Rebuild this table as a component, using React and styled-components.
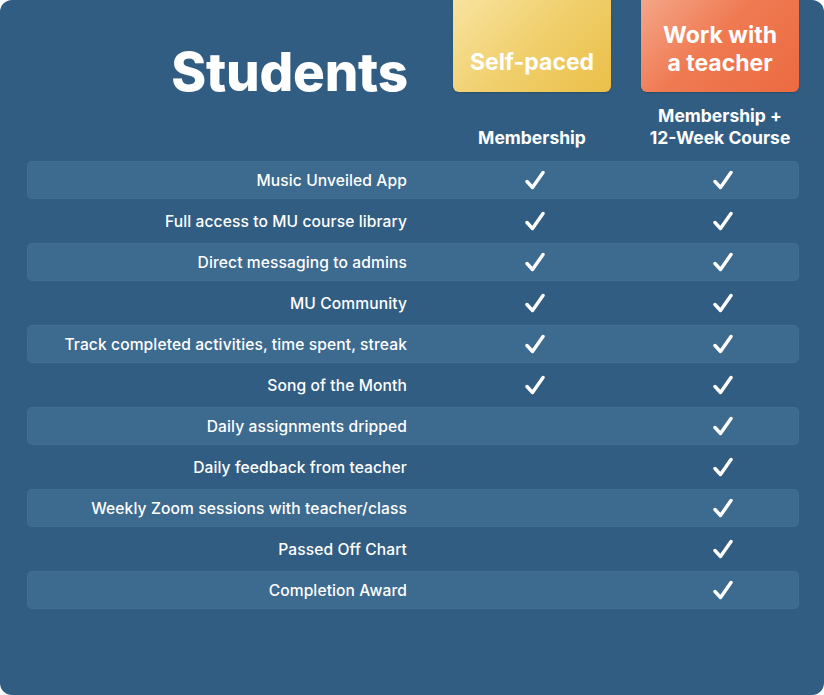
import React from "react";
import styled, { createGlobalStyle } from "styled-components";

const Global = createGlobalStyle`
  html, body { margin: 0; padding: 0; background: #ffffff; }
  body { font-family: Inter, "Noto Sans", sans-serif; }
  * { box-sizing: border-box; }
`;

const Panel = styled.div`
  width: 824px;
  height: 695px;
  background: #325d82;
  border-radius: 12px;
  padding: 0 25px 0 27px;
  color: #ffffff;
  overflow: hidden;
`;

const Grid = styled.div`
  display: grid;
  grid-template-columns: 396px 158px 158px;
  column-gap: 30px;
  align-items: center;
`;

const Header = styled(Grid)`
  grid-template-rows: 92px 69px;
  align-items: stretch;
`;

const Title = styled.h1`
  margin: 0 0 -7px 0;
  font-size: 53px;
  font-weight: 800;
  letter-spacing: -0.2px;
  line-height: 1;
  text-align: right;
  padding-right: 15px;
  align-self: end;
`;

const PlanBox = styled.div`
  display: flex;
  align-items: center;
  justify-content: center;
  text-align: center;
  border-radius: 0 0 6px 6px;
  font-size: 23px;
  font-weight: 700;
  line-height: 28px;
  padding-top: ${(p) => (p.$twoLine ? "6px" : "32px")};
  background: ${(p) =>
    p.$tone === "gold"
      ? "linear-gradient(135deg, #f8e39f 0%, #f0cf6c 50%, #ebbf48 100%)"
      : "linear-gradient(135deg, #f4a688 0%, #ef7a52 45%, #ec6a40 100%)"};
  box-shadow: 0 1px 2px rgba(0, 0, 0, 0.18);
`;

const SubHead = styled.div`
  display: flex;
  align-items: flex-end;
  justify-content: center;
  text-align: center;
  font-size: 17.5px;
  font-weight: 700;
  line-height: 22px;
  padding-bottom: 12px;
`;

const Rows = styled.div`
  display: flex;
  flex-direction: column;
`;

const Row = styled(Grid)`
  height: ${(p) => (p.$alt ? "38px" : "44px")};
  background: ${(p) => (p.$alt ? "#3d6a8f" : "transparent")};
  border-radius: 5px;
  box-shadow: ${(p) => (p.$alt ? "inset 0 0 0 1px rgba(255,255,255,0.03)" : "none")};
`;

const Label = styled.div`
  text-align: right;
  padding-right: 16px;
  font-size: 15.6px;
  font-weight: 500;
  letter-spacing: 0.1px;
`;

const Cell = styled.div`
  display: flex;
  justify-content: center;
  align-items: center;
  padding-left: ${(p) => (p.$shift ? "5px" : "0")};
`;

const Check = () => (
  <svg width="20" height="20" viewBox="0 0 20 20">
    <path
      d="M2 11.5 L7.5 17.5 L18 2.5"
      fill="none"
      stroke="#ffffff"
      strokeWidth="3.4"
      strokeLinecap="round"
      strokeLinejoin="round"
    />
  </svg>
);

const features = [
  ["Music Unveiled App", true],
  ["Full access to MU course library", true],
  ["Direct messaging to admins", true],
  ["MU Community", true],
  ["Track completed activities, time spent, streak", true],
  ["Song of the Month", true],
  ["Daily assignments dripped", false],
  ["Daily feedback from teacher", false],
  ["Weekly Zoom sessions with teacher/class", false],
  ["Passed Off Chart", false],
  ["Completion Award", false],
];

export default function App() {
  return (
    <>
      <Global />
      <Panel>
        <Header>
          <Title>Students</Title>
          <PlanBox $tone="gold">Self-paced</PlanBox>
          <PlanBox $tone="orange" $twoLine>
            Work with
            <br />a teacher
          </PlanBox>
          <div />
          <SubHead>Membership</SubHead>
          <SubHead>
            Membership +
            <br />
            12-Week Course
          </SubHead>
        </Header>
        <Rows>
          {features.map(([name, self], i) => (
            <Row key={name} $alt={i % 2 === 0}>
              <Label>{name}</Label>
              <Cell $shift>{self ? <Check /> : null}</Cell>
              <Cell $shift>
                <Check />
              </Cell>
            </Row>
          ))}
        </Rows>
      </Panel>
    </>
  );
}
